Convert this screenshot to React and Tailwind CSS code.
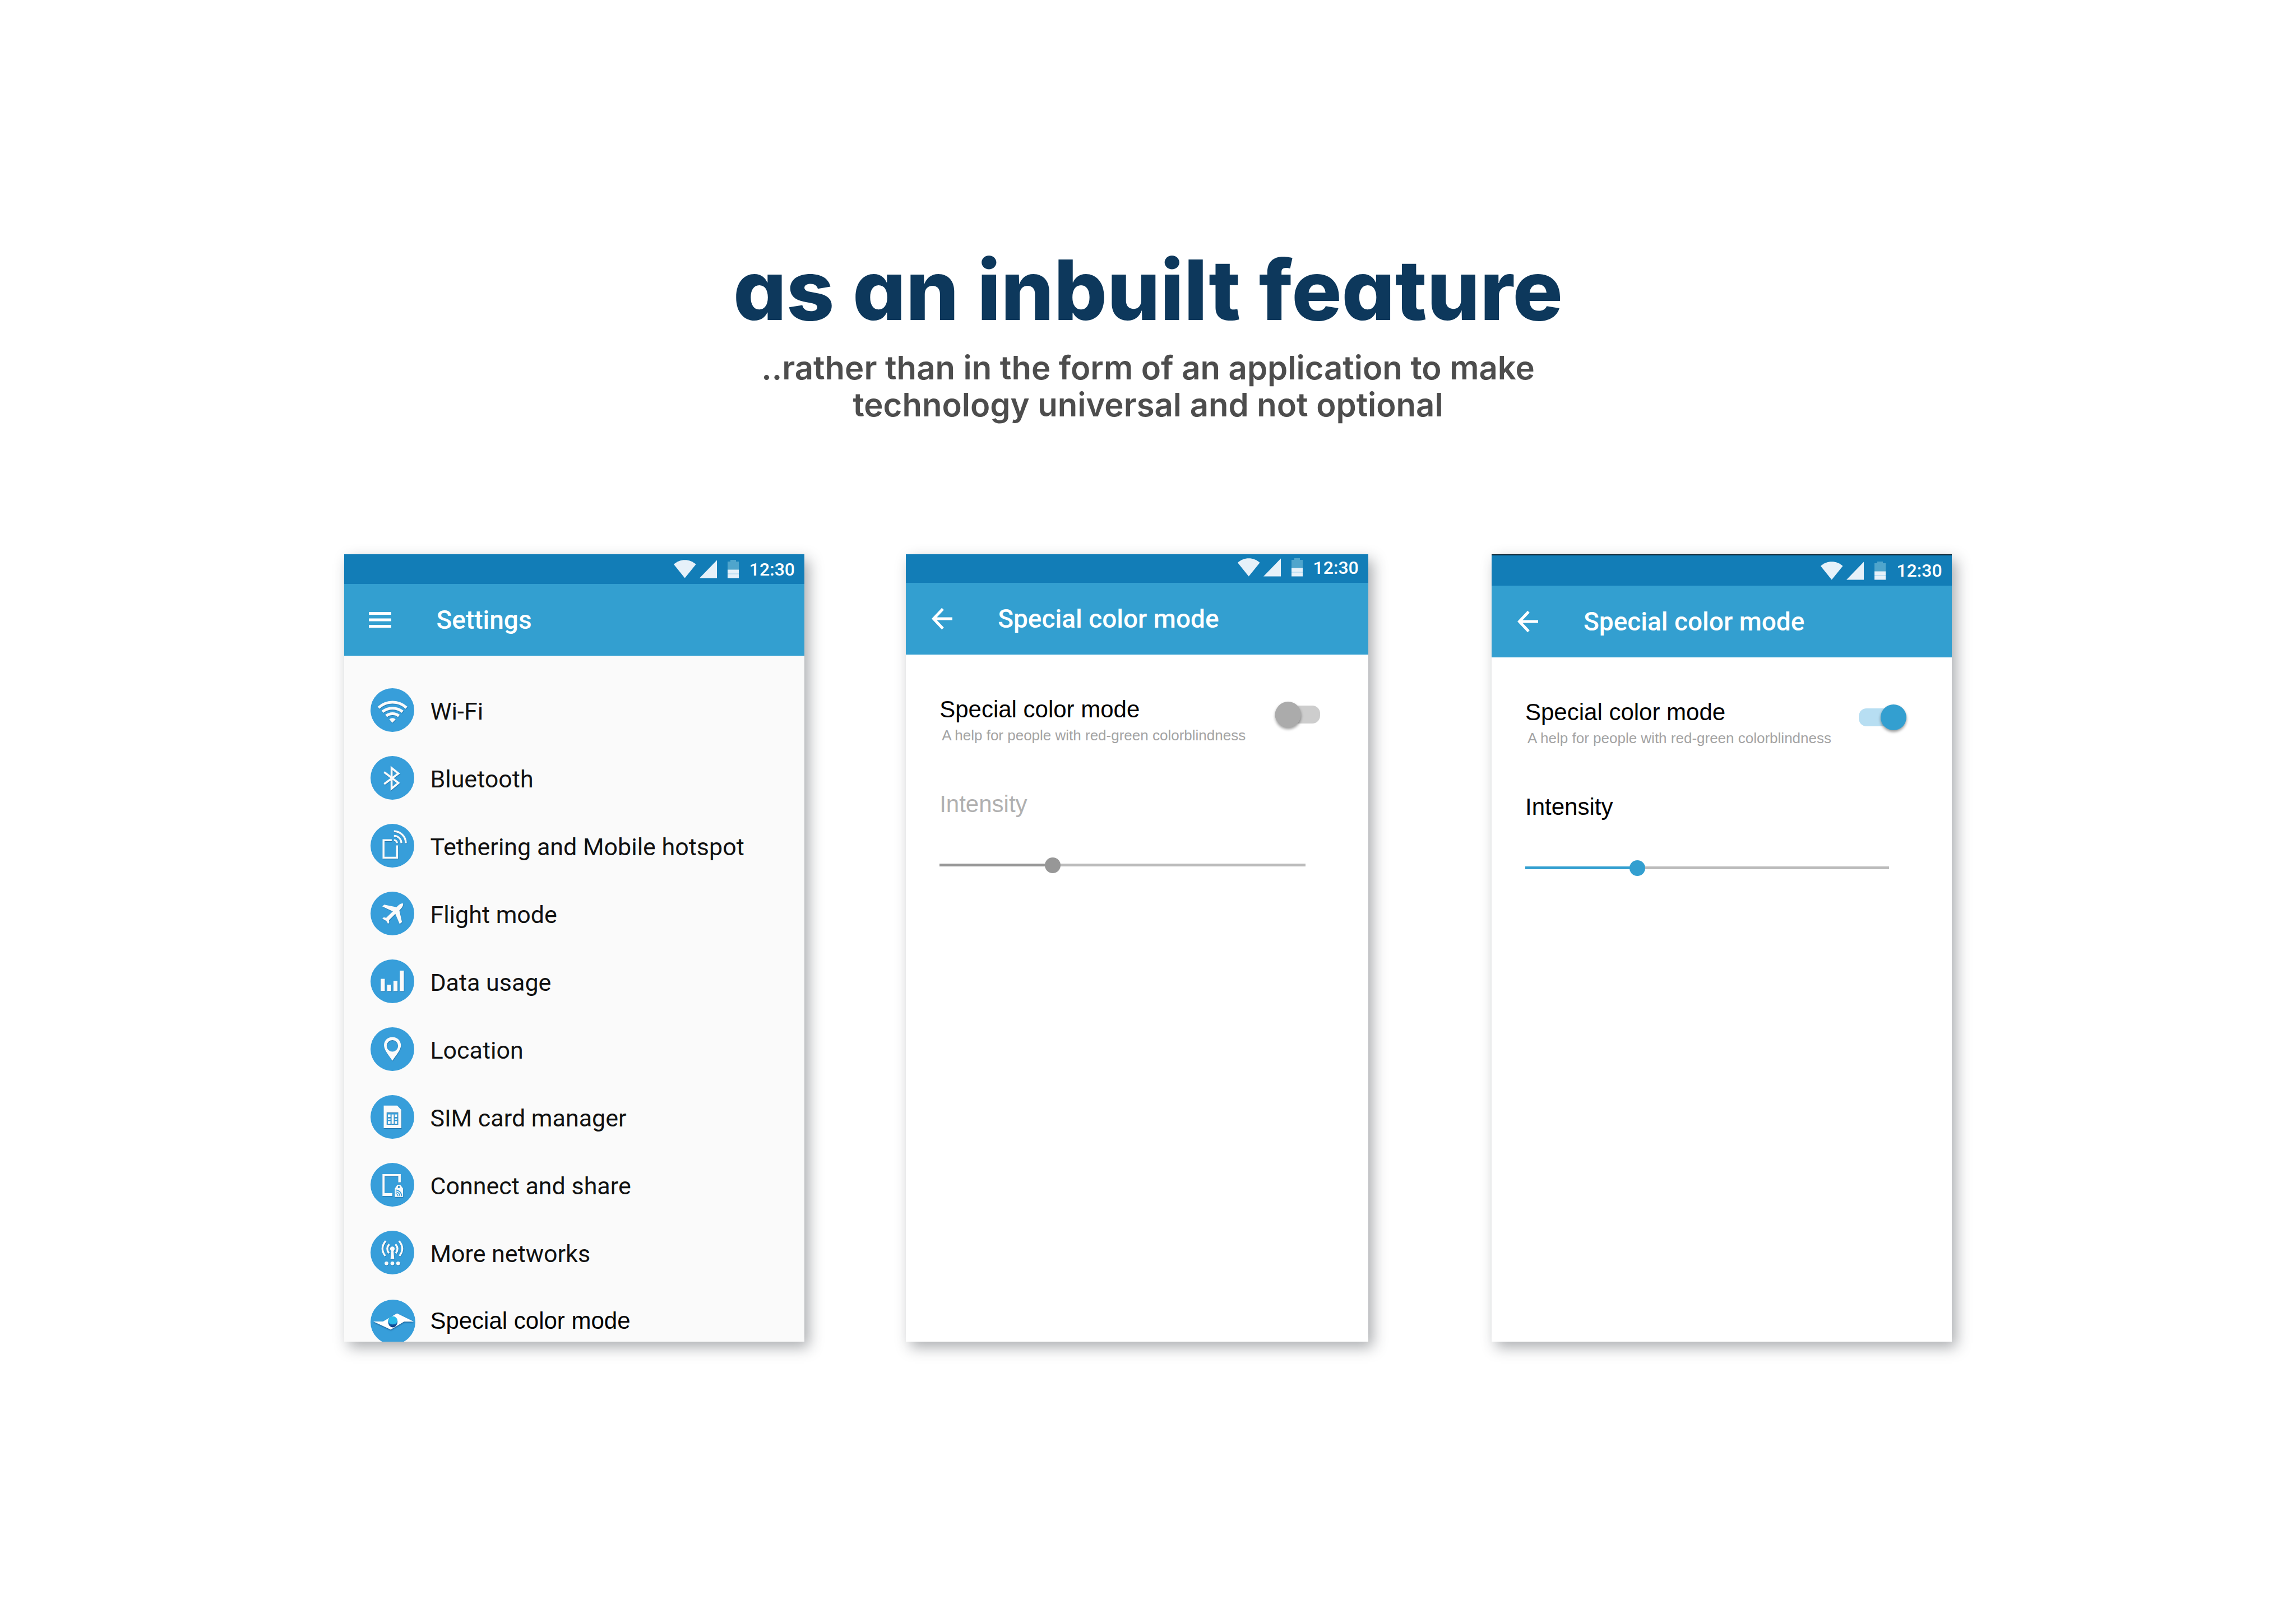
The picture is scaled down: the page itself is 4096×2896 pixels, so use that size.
import { useState } from "react";

const glyphShadow = "[filter:drop-shadow(2px_4px_2px_rgba(10,70,120,0.45))]";

function RoundIcon({ top, children }) {
  return (
    <svg viewBox={`33 ${top} 282 282`} className="size-[78px] shrink-0" aria-hidden="true">
      <circle cx="174" cy={top + 141} r="141" fill="#379eda" />
      <g className={glyphShadow}>{children}</g>
    </svg>
  );
}

function WifiGlyph() {
  return (
    <RoundIcon top={21}>
      <g fill="none" stroke="#fafafa" strokeWidth="18">
        <path d="M85 147A131 131 0 0 1 265 147" />
        <path d="M110 173A104 104 0 0 1 240 173" />
        <path d="M134 200A65 65 0 0 1 216 200" />
      </g>
      <path d="M154 222Q174 205 195 222L174 244Z" fill="#fafafa" />
    </RoundIcon>
  );
}

function BluetoothGlyph() {
  return (
    <RoundIcon top={461}>
      <path
        d="M121 565L213 635L169 671V538L213 574L121 642"
        fill="none"
        stroke="#fafafa"
        strokeWidth="13"
        strokeMiterlimit="8"
      />
    </RoundIcon>
  );
}

function HotspotGlyph() {
  return (
    <RoundIcon top={902}>
      <g fill="none" stroke="#fafafa" strokeWidth="12">
        <path d="M170 1008H117V1121H204V1041" strokeWidth="13" />
        <path d="M184 1007A20 20 0 0 1 204 1027" />
        <path d="M184 979A48 48 0 0 1 232 1027" />
        <path d="M184 950A77 77 0 0 1 261 1027" />
      </g>
    </RoundIcon>
  );
}

function PlaneGlyph() {
  return (
    <RoundIcon top={22}>
      <path
        d="M201 122C214 108 232 94 242 99C247 106 238 126 219 143L236 218L221 231L193 166L152 206L154 220L146 231C141 216 133 206 109 197L118 187L134 191L177 149L109 118L121 106Z"
        fill="#fafafa"
      />
    </RoundIcon>
  );
}

function BarsGlyph() {
  return (
    <RoundIcon top={463}>
      <g fill="#fafafa">
        <rect x="99" y="588" width="26" height="79" />
        <rect x="140" y="626" width="26" height="41" />
        <rect x="181" y="601" width="26" height="66" />
        <rect x="222" y="535" width="26" height="132" />
      </g>
    </RoundIcon>
  );
}

function PinGlyph() {
  return (
    <RoundIcon top={904}>
      <path
        fillRule="evenodd"
        d="M174 967C206 967 229 990 229 1021C229 1050 200 1082 174 1120C148 1082 120 1050 120 1021C120 990 142 967 174 967ZM174 987A37 37 0 1 0 174 1061A37 37 0 1 0 174 987Z"
        fill="#fafafa"
      />
    </RoundIcon>
  );
}

function SimGlyph() {
  return (
    <RoundIcon top={24}>
      <path
        fillRule="evenodd"
        d="M118 92H205L232 120V237H118ZM137 136V216H212V136Z"
        fill="#fafafa"
      />
      <g fill="#fafafa">
        <rect x="145" y="149" width="17" height="17" />
        <rect x="145" y="175" width="17" height="8" />
        <rect x="145" y="192" width="17" height="18" />
        <rect x="169" y="149" width="14" height="61" />
        <rect x="189" y="149" width="16" height="17" />
        <rect x="189" y="175" width="16" height="8" />
        <rect x="189" y="192" width="16" height="18" />
      </g>
    </RoundIcon>
  );
}

function ShareGlyph() {
  return (
    <RoundIcon top={465}>
      <path d="M110 537H228V591H212V550H124V660H174V678H110Z" fill="#fafafa" />
      <path
        fillRule="evenodd"
        d="M205 608H226L243 630V685H190V630ZM216 614A7 7 0 1 0 216 628A7 7 0 1 0 216 614Z"
        fill="#fafafa"
      />
      <g fill="none" stroke="#379eda" strokeWidth="6">
        <path d="M195 664A15 15 0 0 1 210 679" />
        <path d="M195 652A27 27 0 0 1 222 679" />
        <path d="M195 640A39 39 0 0 1 234 679" />
      </g>
    </RoundIcon>
  );
}

function TowerGlyph() {
  return (
    <RoundIcon top={906}>
      <g fill="none" stroke="#fafafa" strokeWidth="12">
        <path d="M154 993Q129 1022 152 1051" />
        <path d="M194 993Q219 1022 196 1051" />
        <path d="M131 972Q91 1020 128 1069" />
        <path d="M217 972Q257 1020 220 1069" />
      </g>
      <g fill="#fafafa">
        <circle cx="174" cy="1023" r="15" />
        <path d="M168 1030H181L186 1089H162Z" />
        <circle cx="136" cy="1117" r="12" />
        <circle cx="174" cy="1117" r="12" />
        <circle cx="211" cy="1117" r="12" />
      </g>
    </RoundIcon>
  );
}

function EyeGlyph() {
  return (
    <svg viewBox="246 87 291 291" className="-mr-0.5 size-20 shrink-0" aria-hidden="true">
      <defs>
        <linearGradient id="iris" x1="0" y1="0" x2="0" y2="1">
          <stop offset="0.4" stopColor="#1c8fd6" />
          <stop offset="1" stopColor="#0b3480" />
        </linearGradient>
      </defs>
      <circle cx="391.5" cy="232.5" r="145.5" fill="#379eda" />
      <path
        d="M264 229H327L418 176L527 230H464L377 282Z"
        fill="#fff"
        className="[filter:drop-shadow(1px_5px_4px_rgba(5,50,100,0.6))]"
      />
      <ellipse cx="390.5" cy="231" rx="31" ry="36" fill="url(#iris)" />
      <ellipse cx="390.5" cy="222" rx="29" ry="26" fill="#29b9e9" />
    </svg>
  );
}

const settings = [
  ["Wi-Fi", WifiGlyph],
  ["Bluetooth", BluetoothGlyph],
  ["Tethering and Mobile hotspot", HotspotGlyph],
  ["Flight mode", PlaneGlyph],
  ["Data usage", BarsGlyph],
  ["Location", PinGlyph],
  ["SIM card manager", SimGlyph],
  ["Connect and share", ShareGlyph],
  ["More networks", TowerGlyph],
];

function StatusBar({ className }) {
  return (
    <div className={`flex items-center justify-end gap-[19px] bg-[#127db7] pr-[17px] ${className}`}>
      <svg viewBox="0 0 116 33" className="h-[33px] w-[116px]" aria-hidden="true">
        <path d="M0 8C11 -2.5 28.5 -2.5 39.5 8L19.7 32.5Z" fill="#e6f1f9" />
        <path d="M46 32.5L77 0.5V32.5Z" fill="#e6f1f9" />
        <path d="M96 3H101V0H111V3H116V18H96Z" fill="#4fa5cc" />
        <path d="M96 17.5H116V32.5H96Z" fill="#e6f1f9" />
        <path d="M96 24H116V26H96Z" fill="#bfe0f3" />
      </svg>
      <time className="text-[32px] leading-10 font-medium text-white">12:30</time>
    </div>
  );
}

function AppBar({ title, label, children }) {
  return (
    <header className="flex h-32 items-center gap-20 bg-[#339fd0] pl-11 text-white">
      <button type="button" aria-label={label} className="flex size-10 items-center justify-center">
        {children}
      </button>
      <h2 className="text-[46px] leading-[56px] font-medium">{title}</h2>
    </header>
  );
}

const cardClass =
  "overflow-hidden shadow-[8px_10px_24px_rgba(35,40,48,0.38)] font-[Roboto,'Liberation_Sans',sans-serif]";

function SettingsCard() {
  return (
    <section className={`col-start-1 aspect-[205/351] bg-[#fafafa] ${cardClass}`}>
      <StatusBar className="h-[53px]" />
      <AppBar title="Settings" label="Menu">
        <svg viewBox="0 0 40 28" className="h-7 w-10" aria-hidden="true">
          <path d="M0 0H40V5H0ZM0 11.5H40V16.5H0ZM0 23H40V28H0Z" fill="#fff" />
        </svg>
      </AppBar>
      <ul className="pt-[36px] leading-[48px] text-[#111]">
        {settings.map(([name, Glyph]) => (
          <li key={name}>
            <a href="#" className="flex h-[121px] items-center gap-7 pl-[47px]">
              <Glyph />
              <span className="pt-1 text-[43px]">{name}</span>
            </a>
          </li>
        ))}
        <li>
          <a
            href="#"
            className="flex h-[127px] items-center gap-7 pl-[47px] font-['Liberation_Sans',Arial,sans-serif] text-black"
          >
            <EyeGlyph />
            <span className="pb-1 text-[42px]">Special color mode</span>
          </a>
        </li>
      </ul>
    </section>
  );
}

const theme = {
  off: {
    title: "text-[#b0b0b0]",
    slider:
      "bg-[linear-gradient(to_right,#979797_31%,#bbbbbb_31%)] [&::-webkit-slider-thumb]:bg-[#979797]",
  },
  on: {
    title: "text-black",
    slider:
      "bg-[linear-gradient(to_right,#339fd0_31%,#bbbbbb_31%)] [&::-webkit-slider-thumb]:bg-[#339fd0]",
  },
};

function ColorModeCard({ id, initial, className, statusClass }) {
  const [on, setOn] = useState(initial);
  const look = on ? theme.on : theme.off;
  return (
    <section className={`bg-white ${cardClass} ${className}`}>
      <StatusBar className={statusClass} />
      <AppBar title="Special color mode" label="Back">
        <svg viewBox="0 0 40 40" className="size-10" aria-hidden="true">
          <path
            d="M39 20H6M22 2.5L5.5 20L22 37.5"
            fill="none"
            stroke="#fff"
            strokeWidth="5"
          />
        </svg>
      </AppBar>
      <div className="pt-[74px] pl-[60px] font-['Liberation_Sans',Arial,sans-serif] text-[42px] leading-[48px]">
        <div className="flex items-start justify-between pr-[86px]">
          <div>
            <label htmlFor={`${id}-switch`} className="block text-black">
              Special color mode
            </label>
            <p className="mt-1.5 pl-1 text-[26px] leading-8 text-[#a3a3a3]">
              A help for people with red-green colorblindness
            </p>
          </div>
          <input
            id={`${id}-switch`}
            type="checkbox"
            role="switch"
            checked={on}
            onChange={(e) => setOn(e.target.checked)}
            className="relative mt-[17px] h-8 w-20 shrink-0 appearance-none rounded-[14px] bg-[#cdcdcd] before:absolute before:-top-[7px] before:left-0 before:size-[46px] before:rounded-full before:bg-[#ababab] before:shadow-[0_3px_5px_rgba(0,0,0,0.4)] before:content-[''] checked:bg-[#b7def2] checked:before:left-[39px] checked:before:bg-[#339fd0]"
          />
        </div>
        <div className="pt-[83px] pr-28">
          <label htmlFor={`${id}-range`} className={`block ${look.title}`}>
            Intensity
          </label>
          <input
            id={`${id}-range`}
            type="range"
            min="0"
            max="100"
            step="1"
            defaultValue="30"
            disabled={!on}
            className={`mt-[82px] block h-[5px] w-full appearance-none [&::-webkit-slider-thumb]:size-7 [&::-webkit-slider-thumb]:appearance-none [&::-webkit-slider-thumb]:rounded-full ${look.slider}`}
          />
        </div>
      </div>
    </section>
  );
}

export default function App() {
  return (
    <main className="min-h-screen bg-white pt-[444px]">
      <div className="text-center font-[Inter,sans-serif]">
        <h1 className="text-[149px] leading-[146px] font-extrabold text-[#0d385c] [font-feature-settings:'cv11']">
          as an inbuilt feature
        </h1>
        <p className="mt-[33px] text-[58px] leading-[66px] font-semibold text-[#4d4d4d]">
          ..rather than in the form of an application to make
          <br />
          technology universal and not optional
        </p>
      </div>
      <div className="mt-[234px] grid grid-cols-[820fr_181fr_824fr_220fr_820fr] px-[15%]">
        <SettingsCard />
        <ColorModeCard
          id="before"
          initial={false}
          className="col-start-3"
          statusClass="h-[51px] pb-1"
        />
        <ColorModeCard
          id="after"
          initial={true}
          className="col-start-5"
          statusClass="h-14 border-t-2 border-[#0b2433]"
        />
      </div>
    </main>
  );
}
